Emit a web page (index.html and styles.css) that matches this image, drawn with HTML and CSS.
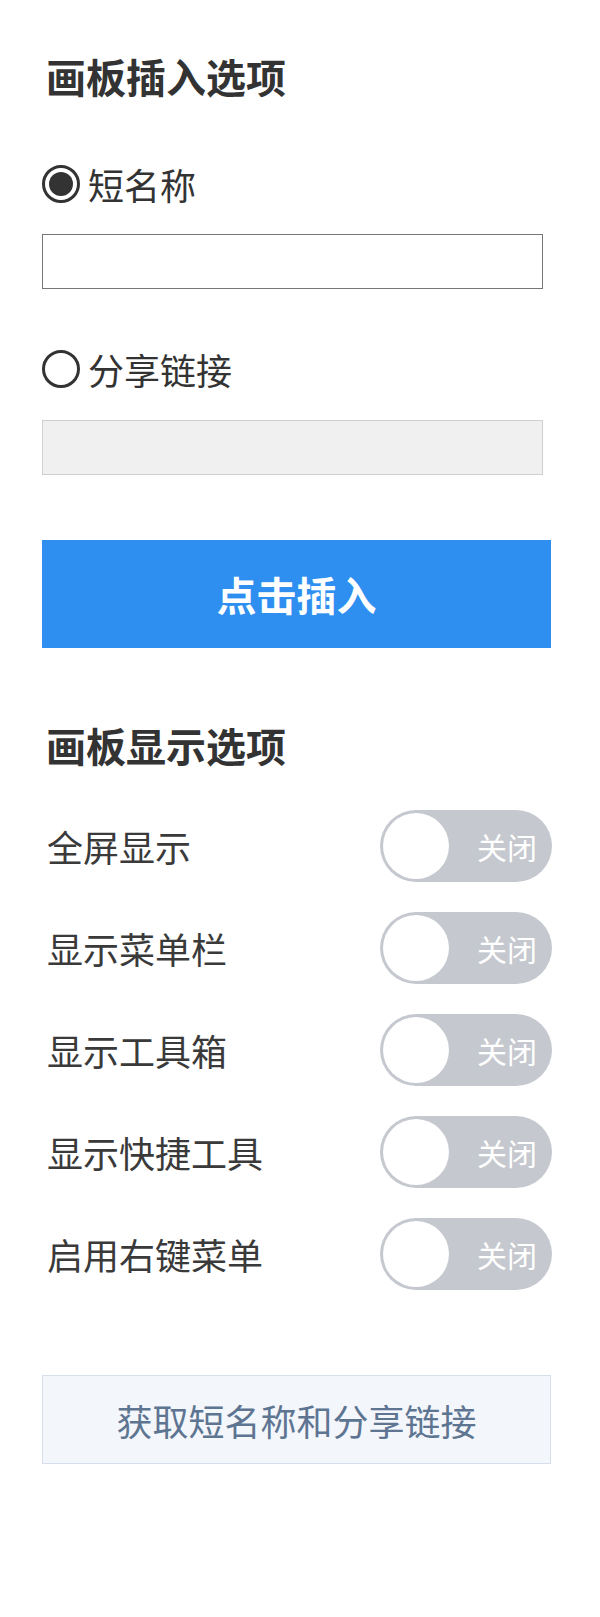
FILE: index.html
```html
<!DOCTYPE html>
<html lang="zh-CN">
<head>
<meta charset="utf-8">
<title>画板选项</title>
<link rel="stylesheet" href="styles.css">
</head>
<body>
<div class="panel">
  <h2 class="title">画板插入选项</h2>
  <label class="radio-row">
    <span class="radio checked"></span>
    <span class="radio-label">短名称</span>
  </label>
  <input class="field" type="text">
  <label class="radio-row radio-row-2">
    <span class="radio"></span>
    <span class="radio-label">分享链接</span>
  </label>
  <input class="field field-disabled" type="text" disabled>
  <button class="btn-primary">点击插入</button>

  <h2 class="title title-2">画板显示选项</h2>
  <div class="switch-list">
    <div class="switch-row"><span class="switch-label">全屏显示</span><span class="switch"><span class="knob"></span><span class="switch-text">关闭</span></span></div>
    <div class="switch-row"><span class="switch-label">显示菜单栏</span><span class="switch"><span class="knob"></span><span class="switch-text">关闭</span></span></div>
    <div class="switch-row"><span class="switch-label">显示工具箱</span><span class="switch"><span class="knob"></span><span class="switch-text">关闭</span></span></div>
    <div class="switch-row"><span class="switch-label">显示快捷工具</span><span class="switch"><span class="knob"></span><span class="switch-text">关闭</span></span></div>
    <div class="switch-row"><span class="switch-label">启用右键菜单</span><span class="switch"><span class="knob"></span><span class="switch-text">关闭</span></span></div>
  </div>
  <button class="btn-secondary">获取短名称和分享链接</button>
</div>
</body>
</html>
```
FILE: styles.css
```css
* { box-sizing: border-box; }
html, body { margin: 0; padding: 0; background: #fff; }
body {
  font-family: "Noto Sans CJK SC", "Noto Sans", sans-serif;
  color: #333;
}
.panel {
  padding: 0 48px 40px 42px;
  display: flex;
  flex-direction: column;
}
.title {
  margin: 52px 0 0 4px;
  font-size: 40px;
  line-height: 48px;
  font-weight: 700;
  color: #333;
}
.title-2 { margin-top: 73px; }
.radio-row {
  display: flex;
  align-items: center;
  height: 48px;
  margin-top: 60px;
}
.radio-row-2 { margin-top: 56px; }
.radio {
  width: 38px;
  height: 38px;
  border: 3px solid #333;
  border-radius: 50%;
  display: flex;
  align-items: center;
  justify-content: center;
  flex: none;
}
.radio.checked::after {
  content: "";
  width: 24px;
  height: 24px;
  border-radius: 50%;
  background: #333;
}
.radio-label {
  margin-left: 8px;
  font-size: 36px;
  line-height: 48px;
  color: #333;
}
.field {
  display: block;
  margin-top: 26px;
  width: 501px;
  height: 55px;
  border: 1px solid #767676;
  background: #fff;
  font-size: 24px;
  padding: 0 8px;
}
.field-disabled {
  margin-top: 27px;
  background: #f0f0f0;
  border-color: #cfcfcf;
}
.btn-primary {
  margin-top: 65px;
  width: 509px;
  height: 108px;
  border: none;
  background: #2e8ff0;
  color: #fff;
  font-family: inherit;
  font-size: 40px;
  font-weight: 700;
  padding: 0;
}
.switch-list {
  display: flex;
  flex-direction: column;
  gap: 30px;
  margin-top: 41px;
}
.switch-row {
  display: flex;
  align-items: center;
  justify-content: space-between;
  height: 72px;
  padding-left: 5px;
}
.switch-label {
  font-size: 36px;
  color: #3a3a3a;
}
.switch {
  width: 172px;
  height: 72px;
  border-radius: 36px;
  background: #c5c8ce;
  padding: 3px;
  display: flex;
  align-items: center;
}
.knob {
  width: 66px;
  height: 66px;
  border-radius: 50%;
  background: #fff;
  flex: none;
}
.switch-text {
  margin-left: auto;
  margin-right: 12px;
  font-size: 30px;
  color: #fff;
}
.btn-secondary {
  margin-top: 85px;
  width: 509px;
  height: 89px;
  border: 1px solid #d8dfec;
  background: #f3f6fb;
  color: #5e7592;
  font-family: inherit;
  font-size: 36px;
  padding: 0;
}
```
